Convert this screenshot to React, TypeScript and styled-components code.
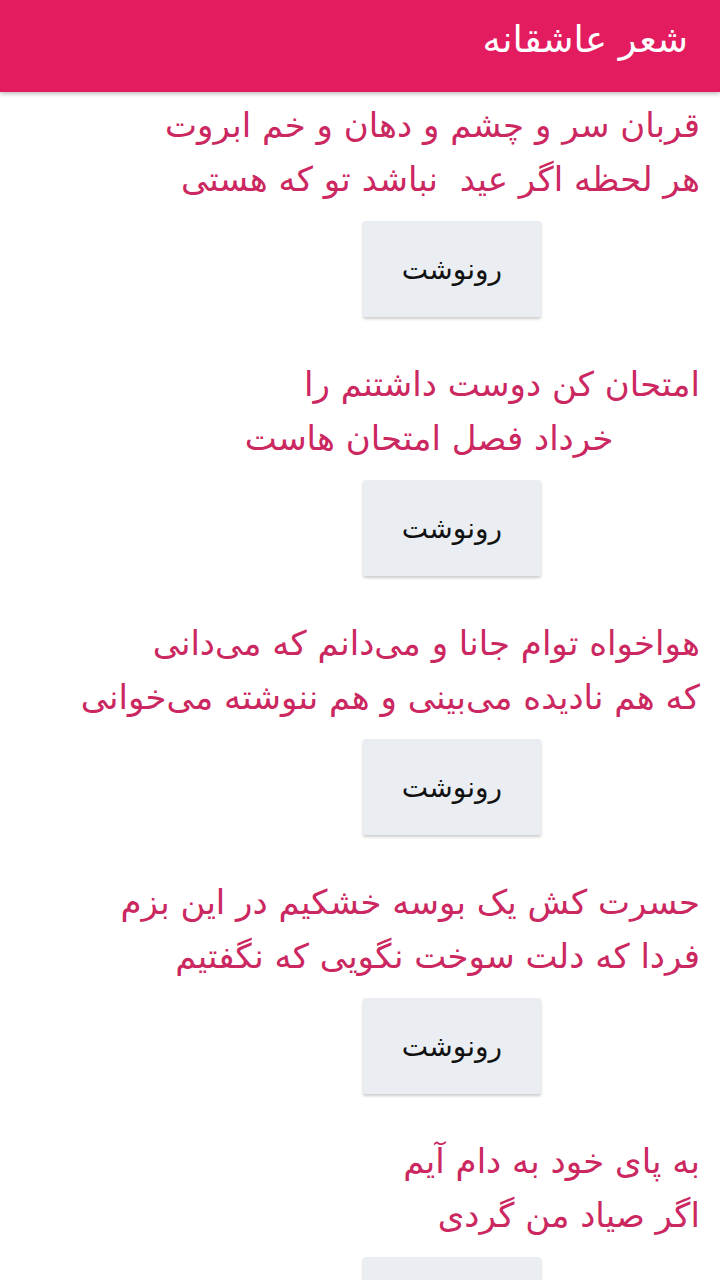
import React from 'react';
import styled, { createGlobalStyle } from 'styled-components';

const GlobalStyle = createGlobalStyle`
  html, body {
    margin: 0;
    padding: 0;
    background: #ffffff;
  }

  body {
    font-family: 'DejaVu Sans', 'Noto Sans', sans-serif;
  }
`;

const poems = [
  ['قربان سر و چشم و دهان و خم ابروت', 'هر لحظه اگر عید  نباشد تو که هستی'],
  ['امتحان کن دوست داشتنم را', '        خرداد فصل امتحان هاست'],
  ['هواخواه توام جانا و می‌دانم که می‌دانی', 'که هم نادیده می‌بینی و هم ننوشته می‌خوانی'],
  ['حسرت کش یک بوسه خشکیم در این بزم', 'فردا که دلت سوخت نگویی که نگفتیم'],
  ['به پای خود به دام آیم', 'اگر صیاد من گردی'],
];

function App() {
  return (
    <Page dir="rtl">
      <GlobalStyle />
      <Toolbar>
        <Title>شعر عاشقانه</Title>
      </Toolbar>

      <List>
        {poems.map((lines, i) => (
          <Item key={i}>
            <Poem>{lines.join('\n')}</Poem>
            <CopyButton type="button">رونوشت</CopyButton>
          </Item>
        ))}
      </List>
    </Page>
  );
}

const Page = styled.div`
  width: 720px;
  height: 1280px;
  overflow: hidden;
  background: #ffffff;
`;

const Toolbar = styled.header`
  position: relative;
  z-index: 1;
  height: 92px;
  display: flex;
  align-items: center;
  padding: 0 32px;
  background-color: #e31b5f;
  box-shadow: 0 2px 4px rgba(0, 0, 0, 0.25);
`;

const Title = styled.h1`
  margin: 0 0 14px;
  font-size: 37px;
  font-weight: normal;
  color: #ffffff;
`;

const List = styled.main`
  display: flex;
  flex-direction: column;
  padding: 6px 20px 0;
`;

const Item = styled.section`
  display: flex;
  flex-direction: column;
  align-items: flex-start;
  padding-bottom: 40px;
`;

const Poem = styled.p`
  margin: 0;
  white-space: pre-wrap;
  font-size: 34px;
  line-height: 54px;
  color: #cb2760;
`;

const CopyButton = styled.button`
  width: 178px;
  height: 96px;
  margin: 15px 159px 0 0;
  border: none;
  border-radius: 2px;
  background-color: #eaeef2;
  box-shadow: 0 2px 3px rgba(0, 0, 0, 0.2);
  font-family: 'DejaVu Sans', sans-serif;
  font-size: 28px;
  color: #111111;
`;

export default App;
